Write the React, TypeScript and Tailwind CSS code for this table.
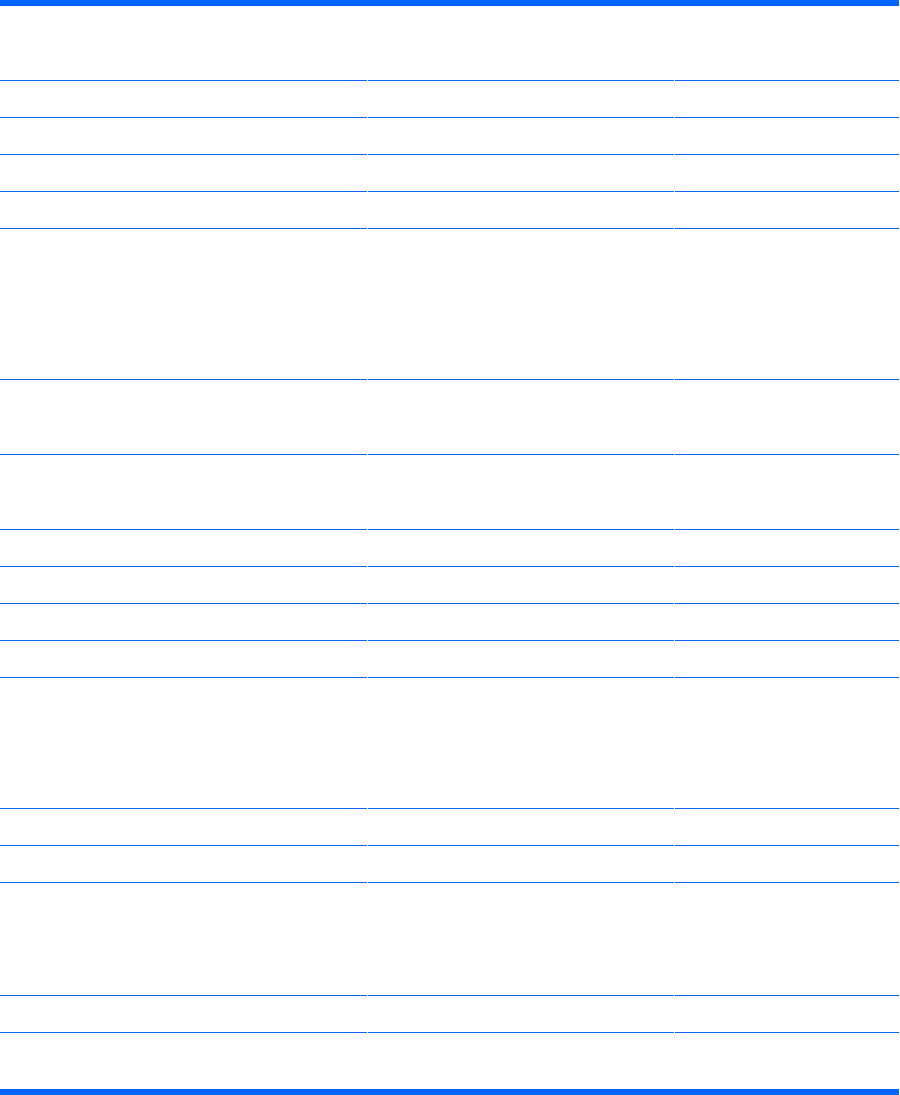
import React from 'react';

// row heights include the 1px bottom rule
const rows: { h: string; rule: boolean }[] = [
  { h: 'h-[75px]', rule: true },
  { h: 'h-[37px]', rule: true },
  { h: 'h-[37px]', rule: true },
  { h: 'h-[37px]', rule: true },
  { h: 'h-[37px]', rule: true },
  { h: 'h-[151px]', rule: true },
  { h: 'h-[75px]', rule: true },
  { h: 'h-[75px]', rule: true },
  { h: 'h-[37px]', rule: true },
  { h: 'h-[37px]', rule: true },
  { h: 'h-[37px]', rule: true },
  { h: 'h-[37px]', rule: true },
  { h: 'h-[131px]', rule: true },
  { h: 'h-[37px]', rule: true },
  { h: 'h-[37px]', rule: true },
  { h: 'h-[113px]', rule: true },
  { h: 'h-[37px]', rule: true },
  { h: 'h-[56px]', rule: false },
];

const App: React.FC = () => {
  return (
    <div className="min-h-screen bg-white font-['Liberation_Sans',sans-serif]">
      <div className="w-[899px]">
        <div className="h-[6px] bg-[#0066ff]" />
        {rows.map((row, i) => (
          <div key={i} className={`grid grid-cols-[367px_306px_224px] gap-x-px bg-white ${row.h}`}>
            {[0, 1, 2].map(c => (
              <div
                key={c}
                className={row.rule ? 'border-b border-[#0a66f5]' : ''}
              />
            ))}
          </div>
        ))}
        <div className="h-[6px] bg-[#0066ff]" />
      </div>
    </div>
  );
};

export default App;
